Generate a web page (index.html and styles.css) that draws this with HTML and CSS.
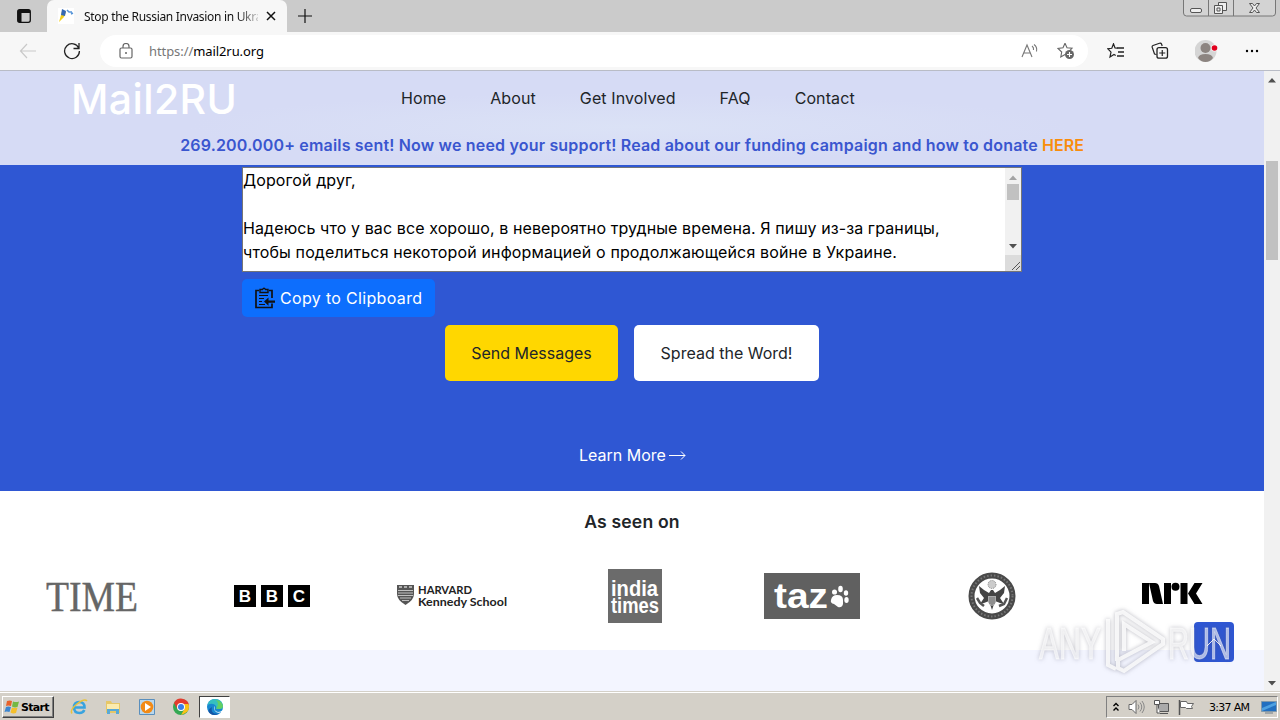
FILE: index.html
```html
<!DOCTYPE html>
<html lang="en">
  <head>
    <meta charset="utf-8">
    <title>Stop the Russian Invasion in Ukraine</title>
    <link rel="stylesheet" href="styles.css">
  </head>
  <body>
    <div class="tabstrip">
      <svg class="tab-actions" width="16" height="16" viewBox="0 0 16 16"><rect x="1.7" y="1.7" width="12.6" height="12.6" rx="2" fill="none" stroke="#111" stroke-width="1.3"/><path d="M2 2h12v3H2zM2 5h3.500v9H2z" fill="#111"/></svg>
      <div class="tab">
        <svg width="16" height="16" viewBox="0 0 16 16"><rect width="16" height="16" fill="#fff"/><path d="M4 3l4 1-2 5-5 5 2-7z" fill="#f2cf1d"/><path d="M4 1l4 2-1 5-4-1z" fill="#3569b5"/><path d="M9 2l2 2 3 0M13 6l2-1" stroke="#5594d8" stroke-width="1.500" fill="none"/></svg>
        <span class="tab-title">Stop the Russian Invasion in Ukra</span>
        <svg width="10" height="10" viewBox="0 0 10 10"><path d="M1 1l8 8M9 1L1 9" stroke="#111" stroke-width="1.5"/></svg>
      </div>
      <svg class="new-tab" width="16" height="16" viewBox="0 0 16 16"><path d="M8 1v14M1 8h14" stroke="#111" stroke-width="1.200"/></svg>
      <svg class="window-buttons" width="94" height="18" viewBox="0 0 94 18"><path d="M.5 0v13q0 3 3 3h86q3 0 3-3V0M25.500 0v16M50.500 0v16" fill="#d3d3d3" stroke="#777"/><g fill="#eee" stroke="#555"><rect x="7.500" y="8.500" width="11" height="4" rx="1.500"/><path d="M35.500 2.500h8v8h-8z"/><path d="M31.500 5.500h8v8h-8z"/><path d="M34 8h3v3h-3z"/><path d="M66.500 3.500h3l2 2.500 2-2.500h3l-3.500 4.500 3.500 4.500h-3l-2-2.500-2 2.500h-3L70 8z"/></g></svg>
    </div>

    <div class="toolbar">
      <svg class="back" width="18" height="16" viewBox="0 0 18 16"><path d="M8 1L1.500 8 8 15M1.500 8H17" fill="none" stroke="#c9c9c9" stroke-width="1.200"/></svg>
      <svg class="reload" width="18" height="18" viewBox="0 0 18 18"><path d="M15.800 6.200A7.400 7.400 0 1 0 16.400 9M16 1v5.500h-5.500" fill="none" stroke="#222" stroke-width="1.300"/></svg>
      <div class="address">
        <svg class="lock" width="14" height="16" viewBox="0 0 14 16"><rect x="1" y="5" width="12" height="10" rx="1.500" fill="none" stroke="#666" stroke-width="1.200"/><path d="M4 5V3.500a3 3 0 0 1 6 0V5" fill="none" stroke="#666" stroke-width="1.200"/><circle cx="7" cy="10" r="1" fill="#666"/></svg>
        <span class="url"><i>https://</i>mail2ru.org</span>
        <svg class="read-aloud" width="18" height="16" viewBox="0 0 18 16"><path d="M1 14L6 2l5 12M2.800 10h6.400M11 3q2 1.500 1.500 4M13 1.500q3.500 2.500 2.500 7" fill="none" stroke="#777" stroke-width="1.100"/></svg>
        <svg width="18" height="18" viewBox="0 0 18 18"><path d="M8 1.300l2 4.500 5 .5-3.500 3.500M8 12.500L3.800 15l.9-5-3.700-3.500 5-.7 2-4.500" fill="none" stroke="#666" stroke-width="1.100"/><circle cx="12.500" cy="12.500" r="4.500" fill="#666"/><path d="M12.500 10v5M10 12.500h5" stroke="#fff" stroke-width="1.100"/></svg>
      </div>
      <div class="tools">
        <svg width="18" height="16" viewBox="0 0 18 16"><path d="M10.500 5.200L8 5 6.500.8 4.800 5.300.8 5.700l3.200 3.500-1 4.800 4-2.500 1.700 1" fill="none" stroke="#222" stroke-width="1.200"/><path d="M10 5h7M11 9h6M10 13h7" stroke="#222" stroke-width="1.300"/></svg>
        <svg width="18" height="18" viewBox="0 0 18 18"><path d="M5.500 12.500L3.500 12 1.200 5.300Q.8 4 2 3.500L8.500 1.200q1.500-.5 2 .8l.7 2" fill="none" stroke="#222" stroke-width="1.200"/><rect x="6" y="5.700" width="10.500" height="10.500" rx="2" fill="none" stroke="#222" stroke-width="1.300"/><path d="M11.250 8v6M8.250 11h6" stroke="#222" stroke-width="1.200"/></svg>
        <svg width="24" height="24" viewBox="0 0 24 24"><circle cx="10.500" cy="12" r="11" fill="#d5d5d5"/><circle cx="10.500" cy="9" r="5" fill="#8c8480"/><path d="M3 19q1-4 7.500-4t7.500 4q-3 4-7.500 4T3 19z" fill="#8c8480"/><circle cx="19.500" cy="9" r="3.600" fill="#f7f7f7"/><circle cx="19.500" cy="9" r="2.800" fill="#e1001e"/></svg>
        <svg width="14" height="4" viewBox="0 0 14 4"><circle cx="2" cy="2" r="1.200"/><circle cx="7" cy="2" r="1.200"/><circle cx="12" cy="2" r="1.200"/></svg>
      </div>
    </div>

    <div class="viewport">
      <div class="page">
        <header>
          <div class="nav-row">
            <a class="brand">Mail2RU</a>
            <nav>
              <a>Home</a>
              <a>About</a>
              <a>Get Involved</a>
              <a>FAQ</a>
              <a>Contact</a>
            </nav>
          </div>
          <p class="announcement">269.200.000+ emails sent! Now we need your support! Read about our funding campaign and how to donate <a>HERE</a></p>
        </header>

        <section class="hero">
          <div class="message">
            <div class="message-text">Дорогой друг,<br><br>Надеюсь что у вас все хорошо, в невероятно трудные времена. Я пишу из-за границы,<br><span class="last-row">чтобы поделиться некоторой информацией о продолжающейся войне в Украине.</span></div>
            <div class="message-scroll">
              <svg width="16" height="103" viewBox="0 0 16 103"><path d="M4 12l4-4.500 4 4.500z" fill="#a3a3a3"/><path d="M2 16h12v16H2z" fill="#c1c1c1"/><path d="M4 76h8l-4 4.500z" fill="#505050"/><path d="M0 87h16v16H0z" fill="#dcdcdc"/><path d="M7 102l8-8M11 102l4-4" stroke="#555"/></svg>
            </div>
          </div>
          <button class="copy">
            <svg width="22" height="22" viewBox="0 0 22 22"><path d="M5 3.500H2v17h16v-4M15 3.500h3V11" fill="none" stroke="#111" stroke-width="1.700"/><path d="M6 5.500V2.500h2.500Q10 0 11.500 2.500H14v3z" fill="none" stroke="#111" stroke-width="1.400"/><path d="M5 8.500h9M5 11.500h5M5 14.500h3M5 17.500h6" stroke="#111" stroke-width="1.200"/><path d="M10 14.500l4.500-4v3H21v2.300h-6.500v3z" fill="#111"/></svg>
            <span>Copy to Clipboard</span>
          </button>
          <div class="actions">
            <button class="send">Send Messages</button>
            <button class="spread">Spread the Word!</button>
          </div>
          <a class="learn"><span>Learn More</span> <svg width="17" height="10" viewBox="0 0 17 10"><path d="M0 5.500h16M12 1.500l4 4-4 4" fill="none" stroke="#fff"/></svg></a>
        </section>

        <section class="seen">
          <h2>As seen on</h2>
          <div class="logos">
            <svg width="98" height="54" viewBox="0 0 98 54"><text x="3" y="41.500" class="time" textLength="92" lengthAdjust="spacingAndGlyphs">TIME</text></svg>
            <svg width="76" height="24" viewBox="0 0 76 24"><path d="M0 1h22v22H0zM27 1h22v22H27zM54 1h22v22H54z"/><g class="bbc"><text x="11" y="18">B</text><text x="38" y="18">B</text><text x="65" y="18">C</text></g></svg>
            <svg width="112" height="32" viewBox="0 0 112 32"><path d="M1 5h17v9q0 6-8.500 11Q1 20 1 14z" fill="#555"/><path d="M2 10.500h15M2 13h15M2 15.500h15M4 18h11M6 20.500h7" stroke="#ddd" stroke-width=".8"/><path d="M3 7h3M8 7h3M13 7h3" stroke="#ccc" stroke-width="1.500"/><g class="harvard"><text x="22" y="13.500" textLength="54" lengthAdjust="spacingAndGlyphs">HARVARD</text><text x="22" y="25.500" textLength="89" lengthAdjust="spacingAndGlyphs">Kennedy School</text></g></svg>
            <svg class="india-logo" width="54" height="54" viewBox="0 0 54 54"><path d="M0 0h54v54H0z" fill="#6b6b6b"/><g class="india"><text x="3" y="26.500" textLength="47" lengthAdjust="spacingAndGlyphs">india</text><text x="3" y="43.500" textLength="48" lengthAdjust="spacingAndGlyphs">times</text></g></svg>
            <svg width="96" height="46" viewBox="0 0 96 46"><path d="M0 0h96v46H0z" fill="#606060"/><text class="taz" x="10" y="35" textLength="54" lengthAdjust="spacingAndGlyphs">taz</text><g fill="#fff"><path d="M67 27q1-5 6-5 6 0 6 5v4q-1 4-5 3l-4-3q-4-1-3-4z"/><ellipse cx="70.500" cy="19" rx="2.500" ry="2.600"/><ellipse cx="76.500" cy="16" rx="2.300" ry="3.200"/><ellipse cx="82" cy="20" rx="2.200" ry="2.800"/><ellipse cx="82.500" cy="27" rx="2.200" ry="2.900"/></g></svg>
            <svg width="48" height="48" viewBox="0 0 48 48"><circle cx="24" cy="24" r="20.500" fill="#fff" stroke="#4a4a4a" stroke-width="6"/><circle cx="24" cy="24" r="20.500" fill="none" stroke="#777" stroke-width="2" stroke-dasharray="1.500 2"/><circle cx="24" cy="12.500" r="4" fill="#ccc" stroke="#888" stroke-dasharray="1 1"/><path d="M11 14l1 7 4 5-4 6 4-1 5-2 1 3 2 6 2-6 1-3 5 2 4 1-4-6 4-5 1-7-5 4-5 3-2-3h-2l-2 3-5-3z" fill="#444"/><path d="M20 24h8v6q-1 3-4 4-3-1-4-4z" fill="#aaa"/><path d="M22 25v7M24 25v8M26 25v7" stroke="#666" stroke-width=".8"/><path d="M9 26l3 5 4 3M39 26l-3 6-5 2" fill="none" stroke="#555" stroke-width="2.500"/></svg>
            <svg class="nrk-logo" width="62" height="24" viewBox="0 0 62 24"><path d="M1 1h7v21H1zM8 1h6q3 0 4 3l4 18h-6q-3 0-4-3zM23 1h7v21h-7z"/><circle cx="34.500" cy="4.800" r="4"/><path d="M39.500 1h7v21h-7zM53.500 1h8l-6.500 10.500L61.500 22H53.500L47 11.500z"/></svg>
          </div>
        </section>
        <section class="next"></section>
      </div>
      <div class="scrollbar">
        <svg width="16" height="620" viewBox="0 0 16 620"><path d="M4 11.500l4-4.500 4 4.500zM4 610h8l-4 4.500z" fill="#505050"/><path d="M2 90h12v99H2z" fill="#c1c1c1"/></svg>
      </div>

      <div class="back-to-top">
        <svg width="20" height="12" viewBox="0 0 20 12"><path d="M3 10l7-7 7 7" fill="none" stroke="#fff"/></svg>
      </div>
      <svg class="watermark" width="200" height="68" viewBox="0 0 200 68"><g class="any"><text x="3" y="51" textLength="62" lengthAdjust="spacingAndGlyphs">ANY</text><text x="132" y="51" textLength="63" lengthAdjust="spacingAndGlyphs">RUN</text></g><g class="play"><path d="M72 11v46l8 4M81 53V6l6-2 40 27v5L88 63l-6-3v-8l34-18-28-18v27"/></g></svg>
    </div>

    <div class="taskbar">
      <div class="start">
        <svg width="16" height="16" viewBox="0 0 16 16"><path d="M3 2q3-1 5 0L7 7Q4 6 2 7z" fill="#e8622a"/><path d="M9 2.500q3 1 6 0L13.500 8q-3 1-5.500-.5z" fill="#75b843"/><path d="M2 8q2-1 5 0l-1.500 5q-3-1-5 0z" fill="#3c86d0"/><path d="M8 8.500q3 1 5.500 0L12 14q-3 1-5.500-.5z" fill="#f5bf2b"/></svg>
        <b>Start</b>
      </div>
      <div class="pinned">
        <svg width="18" height="18" viewBox="0 0 18 18"><path d="M4 9.500h10.500Q14.500 4 9.200 4T4 9.500 9.500 15q3.500 0 4.800-3" fill="none" stroke="#38a3df" stroke-width="2.600"/><path d="M2 15.500Q-.5 12 7 6t10-3" fill="none" stroke="#e9c23c" stroke-width="1.500"/></svg>
        <svg width="18" height="18" viewBox="0 0 18 18"><path d="M2 3h5l1 2h8v10H2z" fill="#e6c768"/><path d="M3 6h12v5H3z" fill="#fbebae"/><path d="M3 16v-5h12v5h-3v-3H6v3z" fill="#59a9d6"/></svg>
        <svg width="18" height="18" viewBox="0 0 18 18"><path d="M1.500 1.500h15v15h-15z" fill="#b9d7ed" stroke="#5a8fbd"/><circle cx="9" cy="9" r="6.300" fill="#f28a16"/><path d="M7 5l6 4-6 4z" fill="#fff"/></svg>
        <svg width="18" height="18" viewBox="0 0 18 18"><circle cx="9" cy="9" r="8" fill="#33a853"/><path d="M2 5a8 8 0 0 1 15 2H9L6 12z" fill="#e33b2e"/><path d="M9 17l4-7-1-4h4.500Q19 14 9 17z" fill="#fbc116"/><circle cx="9" cy="9" r="4" fill="#fff"/><circle cx="9" cy="9" r="3" fill="#377fe8"/></svg>
      </div>
      <div class="running">
        <svg width="18" height="18" viewBox="0 0 18 18"><circle cx="9" cy="9" r="8" fill="#1687d0"/><path d="M1.500 7Q3 1 9 1q7 0 8 7 0 3-4 3H10q1-1 0-3-3-4-8.500-1z" fill="#35bfc0"/><path d="M10 2q6 1 7 6 0 3-4 3l-3-.5Q14 6 10 2z" fill="#62cf65"/><path d="M6 9q-2 8 7 6.500-5 3-9 0T6 9z" fill="#1456a5"/><path d="M9 8q-2 5 3 6 3 0 5-2l-1 2q-5 2-7-1T9 8z" fill="#fff"/></svg>
      </div>
      <div class="tray">
        <svg width="8" height="12" viewBox="0 0 8 12"><path d="M1.500 5L4 2.500 6.500 5M1.500 9.500L4 7l2.500 2.500" fill="none" stroke="#000" stroke-width="1.400"/></svg>
        <svg width="17" height="16" viewBox="0 0 17 16"><path d="M1 5.500h3l4-4v13l-4-4H1z" fill="#fff" stroke="#666"/><path d="M10 5.500q2 2.500 0 5M12 3.500q3.500 4.500 0 9M14 2q4.500 6 0 12" fill="none" stroke="#888"/></svg>
        <svg width="17" height="16" viewBox="0 0 17 16"><path d="M5.500 4.500h10v8h-10z" fill="#aaa" stroke="#555"/><path d="M7 14.500h8M1.500 1.500h5v4h-5zM4 6v8h3" fill="#fff" stroke="#555"/></svg>
        <svg width="17" height="16" viewBox="0 0 17 16"><path d="M1.500 1v15" stroke="#555" stroke-width="1.500"/><path d="M2.500 2.500h6l1 2h6l-2 3 1 2h-6l-1-1h-5z" fill="#fff" stroke="#666"/></svg>
        <span class="clock">3:37 AM</span>
        <svg width="16" height="14" viewBox="0 0 16 14"><path d="M.5 1.500h15v10H.5z" fill="#226fc0" stroke="#8098aa"/><path d="M1 8l14-6v3L1 11z" fill="#4ea1e1"/><path d="M4 13h8" stroke="#6d7d88"/></svg>
      </div>
    </div>
  </body>
</html>
```

FILE: styles.css
```css
* {
  box-sizing: border-box;
}

body {
  margin: 0;
  width: 1280px;
  height: 720px;
  overflow: hidden;
  display: flex;
  flex-direction: column;
  font-family: Inter, sans-serif;
  background-color: #fff;
}

svg {
  display: block;
  flex: none;
}

/* browser window */
.tabstrip {
  height: 32px;
  flex: none;
  display: flex;
  align-items: center;
  background-color: #cbcbcb;
  padding-left: 16px;
}

.tab {
  width: 240px;
  height: 32px;
  margin-left: 15px;
  padding: 0 11px;
  display: flex;
  align-items: center;
  border-radius: 7px 7px 0 0;
  background-color: #f7f7f7;
}

.tab-title {
  width: 174px;
  margin: 0 8px 0 10px;
  white-space: nowrap;
  font: 12px "Noto Sans", sans-serif;
  letter-spacing: -0.31px;
  color: #111;
  -webkit-mask-image: linear-gradient(90deg, #000 88%, rgba(0, 0, 0, 0.2));
}

.new-tab {
  margin-left: 10px;
}

.window-buttons {
  margin: 0 3px 14px auto;
}

.toolbar {
  height: 39px;
  flex: none;
  display: flex;
  align-items: center;
  padding-left: 19px;
  background-color: #f7f7f7;
  border-bottom: 1px solid #b9bcc6;
}

.reload {
  margin-left: 26px;
}

.address {
  width: 988px;
  height: 32px;
  margin-left: 19px;
  padding: 0 13px 0 19px;
  display: flex;
  align-items: center;
  border-radius: 16px;
  background-color: #fff;
}

.url {
  margin-left: 16px;
  font: 13px "Noto Sans", sans-serif;
  letter-spacing: -0.08px;
  color: #000;
}

.url i {
  font-style: normal;
  color: #777;
}

.read-aloud {
  margin: 0 18px 0 auto;
}

.tools {
  display: flex;
  align-items: center;
  margin-left: 19px;
  gap: 26px;
}

/* page */
.viewport {
  position: relative;
  height: 620px;
  flex: none;
  display: flex;
}

.page {
  width: 1264px;
}

.scrollbar {
  width: 16px;
  background-color: #f1f1f1;
}

header {
  height: 94px;
  background: radial-gradient(ellipse 440px 34px at 630px 56px, #dbe2f6, #d6dbf5);
}

.nav-row {
  height: 56px;
  display: flex;
  align-items: center;
  padding-left: 71px;
}

.brand {
  width: 330px;
  font-size: 41px;
  line-height: 56px;
  font-weight: 500;
  letter-spacing: 0.4px;
  color: #fff;
}

nav {
  display: flex;
  gap: 44px;
  padding-bottom: 3px;
  font-size: 16px;
  letter-spacing: 0.1px;
  color: #212529;
}

.announcement {
  margin: 0;
  padding-top: 6px;
  line-height: 24px;
  font-size: 16px;
  font-weight: 600;
  letter-spacing: 0.18px;
  text-align: center;
  white-space: nowrap;
  color: #3a56cf;
}

.announcement a {
  letter-spacing: 0;
  color: #f98c0c;
}

.hero {
  height: 326px;
  padding: 2px 242px 0;
  display: flex;
  flex-direction: column;
  align-items: center;
  background-color: #2f57d3;
}

.message {
  width: 780px;
  height: 105px;
  display: flex;
  justify-content: space-between;
  border: 1px solid #767676;
  background-color: #fff;
}

.message-text {
  font-size: 16px;
  line-height: 24px;
  letter-spacing: 0.1px;
  white-space: nowrap;
  color: #000;
}

.last-row {
  letter-spacing: 0.135px;
}

.message-scroll {
  background-color: #f1f1f1;
}

button {
  border: none;
  border-radius: 5px;
  font-family: Inter, sans-serif;
  font-size: 16px;
  color: #212529;
}

.copy {
  width: 193px;
  height: 38px;
  margin-top: 7px;
  padding: 0 0 1px 12px;
  align-self: flex-start;
  display: flex;
  align-items: center;
  gap: 4px;
  letter-spacing: 0.33px;
  background-color: #0d6efd;
  color: #fff;
}

.actions {
  display: flex;
  gap: 16px;
  margin-top: 8px;
}

.actions button {
  height: 56px;
  padding: 0;
}

.actions .send {
  width: 173px;
  background-color: #ffd700;
}

.actions .spread {
  width: 185px;
  background-color: #fff;
}

.learn {
  display: flex;
  align-items: center;
  gap: 3px;
  margin: 62px 0 0 1px;
  line-height: 24px;
  font-size: 16px;
  color: #fff;
}

.seen {
  height: 159px;
  padding: 19px 2px 0;
  background-color: #fff;
}

h2 {
  margin: 0;
  font-size: 17.6px;
  line-height: 24px;
  font-weight: 600;
  letter-spacing: 0.15px;
  text-align: center;
  color: #212529;
}

.logos {
  display: grid;
  grid-template-columns: repeat(7, 180px);
  place-items: center;
  height: 54px;
  margin-top: 35px;
}

.india-logo {
  margin-left: 5px;
}

.nrk-logo {
  margin-bottom: 4px;
}

.time {
  font: 42px "Liberation Serif", serif;
  fill: #666;
  stroke: #666;
  stroke-width: 0.4px;
}

.bbc {
  font: bold 17px "Liberation Sans", sans-serif;
  fill: #fff;
  text-anchor: middle;
}

.harvard {
  font: bold 12px Lato, sans-serif;
  fill: #222;
}

.india {
  font: bold 22px "Liberation Sans", sans-serif;
  fill: #fff;
}

.taz {
  font: bold 35px "Liberation Sans", sans-serif;
  fill: #fff;
}

.next {
  height: 41px;
  background-color: #f3f5ff;
}

.back-to-top {
  position: absolute;
  left: 1194px;
  top: 551px;
  width: 40px;
  height: 40px;
  display: flex;
  align-items: center;
  justify-content: center;
  border-radius: 4px;
  background-color: #2f57d3;
}

.watermark {
  position: absolute;
  left: 1036px;
  top: 537px;
  filter: drop-shadow(0 0 2px rgba(80, 80, 100, 0.5));
}

.any {
  font: 45px "Liberation Sans", sans-serif;
  fill: rgba(255, 255, 255, 0.6);
  stroke: rgba(255, 255, 255, 0.5);
}

.play {
  fill: none;
  stroke: rgba(255, 255, 255, 0.8);
  stroke-width: 4;
}

/* windows taskbar */
.taskbar {
  height: 29px;
  flex: none;
  display: flex;
  align-items: center;
  padding: 2px 2px 0;
  border-top: 1px solid #d4d0c8;
  box-shadow: inset 0 1px #fff;
  background-color: #d4d0c8;
}

.start {
  width: 52px;
  height: 22px;
  display: flex;
  align-items: center;
  gap: 1px;
  padding-left: 1px;
  border: 1px solid;
  border-color: #fff #404040 #404040 #fff;
  box-shadow: inset -1px -1px #808080;
  font: 11px "DejaVu Sans", sans-serif;
  letter-spacing: -0.7px;
}

.pinned {
  display: flex;
  gap: 16px;
  margin-left: 16px;
}

.running {
  width: 31px;
  height: 22px;
  margin-left: 9px;
  display: flex;
  align-items: center;
  justify-content: center;
  border: 1px solid;
  border-color: #404040 #fff #fff #404040;
  background-color: #fff;
}

.tray {
  width: 172px;
  height: 22px;
  margin-left: auto;
  display: flex;
  align-items: center;
  gap: 8px;
  padding-left: 5px;
  border: 1px solid;
  border-color: #808080 #fff #fff #808080;
}

.clock {
  width: 42px;
  margin: 0 2px 0 6px;
  white-space: nowrap;
  font: 11px "DejaVu Sans", sans-serif;
  letter-spacing: -0.7px;
}
```
